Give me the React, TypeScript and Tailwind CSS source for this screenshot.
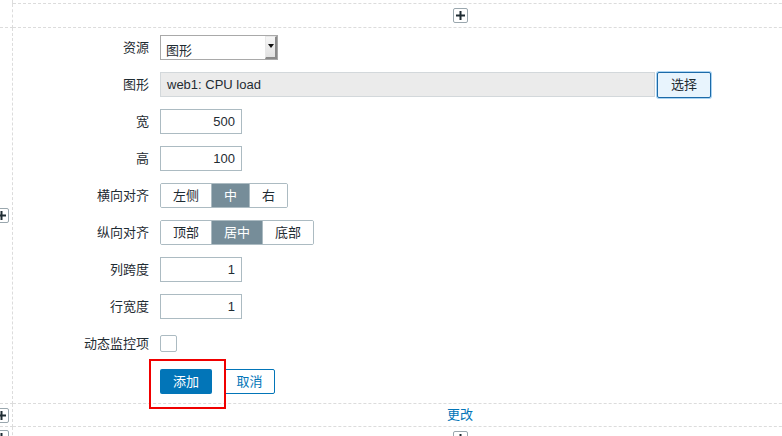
import type { ReactNode } from "react";

const font = { fontFamily: '"Liberation Sans", "Noto Sans CJK SC", Arial, sans-serif' };

function PlusBox() {
    return (
        <div className="w-[15px] h-[15px] shrink-0 bg-white border border-[#9aa7ae] rounded-[2px] flex items-center justify-center">
            <svg width="9" height="9" viewBox="0 0 9 9">
                <rect x="3.5" y="0" width="2" height="9" fill="#1f2c33" />
                <rect x="0" y="3.5" width="9" height="2" fill="#1f2c33" />
            </svg>
        </div>
    );
}

function Row({ label, children }: { label: string; children: ReactNode }) {
    return (
        <div className="flex items-center h-[25px]">
            <div className="w-[136px] text-right text-[#1f2c33] pt-[1px]">{label}</div>
            <div className="ml-[11px] flex items-center">{children}</div>
        </div>
    );
}

function NumInput({ value }: { value: string }) {
    return (
        <div className="w-[82px] h-[25px] border border-[#acbbc2] bg-white text-right pr-[6px] leading-[23px] text-[#1f2c33]">
            {value}
        </div>
    );
}

function Segmented({ items, active }: { items: string[]; active: number }) {
    return (
        <div className="flex h-[25px] border border-[#acbbc2] rounded-[2px] overflow-hidden">
            {items.map((t, i) => (
                <div
                    key={t}
                    className={
                        (i === active ? "bg-[#768d99] text-white " : "bg-white text-[#1f2c33] ") +
                        (i > 0 ? "border-l border-[#acbbc2] " : "") +
                        "px-[12px] leading-[23px]"
                    }
                >
                    {t}
                </div>
            ))}
        </div>
    );
}

export default function App() {
    return (
        <div className="w-[782px] h-[436px] overflow-hidden bg-white text-[13px]" style={font}>
            <div className="ml-[-10px] grid grid-cols-[23px_894px] grid-rows-[4px_24px_376px_23px_60px]">
                {/* row 0 */}
                <div className="border-r border-dashed border-[#dcdcdc]" />
                <div className="border-b border-dashed border-[#dcdcdc]" />

                {/* row 1 */}
                <div className="border-r border-b border-dashed border-[#dcdcdc]" />
                <div className="border-b border-dashed border-[#dcdcdc] flex items-center justify-center">
                    <PlusBox />
                </div>

                {/* row 2 */}
                <div className="border-r border-b border-dashed border-[#dcdcdc] flex items-center justify-center">
                    <PlusBox />
                </div>
                <div className="border-b border-dashed border-[#dcdcdc] pt-[7px] flex flex-col gap-[12px]">
                    <Row label="资源">
                        <div className="w-[118px] h-[25px] border border-[#a9a9a9] bg-white flex">
                            <div className="flex-1 pl-[5px] pt-[5px] leading-[20px] text-[#1f2c33]">图形</div>
                            <div className="w-[12px] h-[23px] bg-gradient-to-b from-[#f6f6f6] to-[#e2e2e2] border-l border-t border-[#e8e8e8] border-r-2 border-r-[#8a8a8a] border-b-2 border-b-[#8a8a8a] flex items-start justify-center pt-[7px]">
                                <svg width="6" height="4" viewBox="0 0 6 4">
                                    <path d="M0 0h6L3 4z" fill="#111" />
                                </svg>
                            </div>
                        </div>
                    </Row>
                    <Row label="图形">
                        <div className="w-[495px] h-[25px] border border-[#d3d8db] bg-[#ebebeb] pl-[6px] leading-[23px] text-[#1f2c33]">
                            web1: CPU load
                        </div>
                        <div className="ml-[2px] w-[54px] h-[26px] border border-[#1c6aa8] bg-[#e8f4fd] rounded-[2px] shadow-[0_0_0_1px_#a9d3f2] text-center leading-[24px] text-[#1f2c33]">
                            选择
                        </div>
                    </Row>
                    <Row label="宽">
                        <NumInput value="500" />
                    </Row>
                    <Row label="高">
                        <NumInput value="100" />
                    </Row>
                    <Row label="横向对齐">
                        <Segmented items={["左侧", "中", "右"]} active={1} />
                    </Row>
                    <Row label="纵向对齐">
                        <Segmented items={["顶部", "居中", "底部"]} active={1} />
                    </Row>
                    <Row label="列跨度">
                        <NumInput value="1" />
                    </Row>
                    <Row label="行宽度">
                        <NumInput value="1" />
                    </Row>
                    <Row label="动态监控项">
                        <div className="w-[17px] h-[17px] border border-[#acbbc2] rounded-[2px] bg-white" />
                    </Row>
                    <div className="flex h-[25px] mt-[1px] pl-[147px]">
                        <div className="relative">
                            <div className="w-[52px] h-[25px] bg-[#0275b8] rounded-[2px] text-white text-center leading-[25px]">添加</div>
                            <div className="absolute left-[-11px] top-[-10px] w-[77px] h-[50px] border-2 border-[#f00000]" />
                        </div>
                        <div className="ml-[12px] w-[51px] h-[25px] border border-[#0275b8] rounded-[2px] text-[#0275b8] text-center leading-[23px]">
                            取消
                        </div>
                    </div>
                </div>

                {/* row 3 */}
                <div className="border-r border-b border-dashed border-[#dcdcdc] flex items-center justify-center">
                    <PlusBox />
                </div>
                <div className="border-b border-dashed border-[#dcdcdc] flex items-center justify-center">
                    <span className="text-[#0275b8] text-[13px]">更改</span>
                </div>

                {/* row 4 */}
                <div className="border-r border-dashed border-[#dcdcdc] flex justify-center pt-[3px]">
                    <PlusBox />
                </div>
                <div className="flex justify-center pt-[4px]">
                    <PlusBox />
                </div>
            </div>
        </div>
    );
}
